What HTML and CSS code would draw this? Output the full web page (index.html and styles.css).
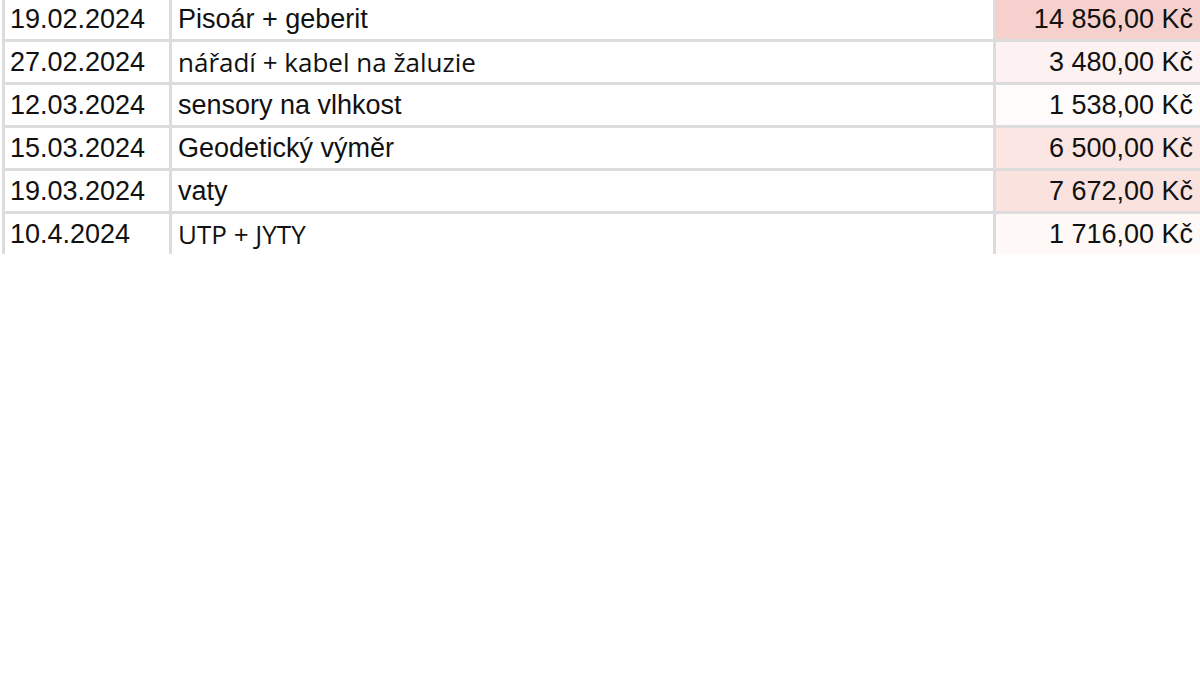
FILE: index.html
```html
<!DOCTYPE html>
<html lang="cs">
<head>
  <meta charset="UTF-8">
  <title>Výdaje</title>
  <link rel="stylesheet" href="styles.css">
</head>
<body>
  <div class="sheet">
    <div class="row">
      <div class="cell date">19.02.2024</div>
      <div class="cell item">Pisoár + geberit</div>
      <div class="cell price p1">14 856,00 Kč</div>
    </div>
    <div class="row">
      <div class="cell date">27.02.2024</div>
      <div class="cell item humanist">nářadí + kabel na žaluzie</div>
      <div class="cell price p2">3 480,00 Kč</div>
    </div>
    <div class="row">
      <div class="cell date">12.03.2024</div>
      <div class="cell item">sensory na vlhkost</div>
      <div class="cell price p3">1 538,00 Kč</div>
    </div>
    <div class="row">
      <div class="cell date">15.03.2024</div>
      <div class="cell item">Geodetický výměr</div>
      <div class="cell price p4">6 500,00 Kč</div>
    </div>
    <div class="row">
      <div class="cell date">19.03.2024</div>
      <div class="cell item">vaty</div>
      <div class="cell price p5">7 672,00 Kč</div>
    </div>
    <div class="row last">
      <div class="cell date">10.4.2024</div>
      <div class="cell item humanist">UTP + JYTY</div>
      <div class="cell price p6">1 716,00 Kč</div>
    </div>
  </div>
</body>
</html>
```

FILE: styles.css
```css
body {
  margin: 0;
  background: #fff;
  font-family: "Liberation Sans", Arial, sans-serif;
  color: #111;
}
.sheet {
  margin-top: -1px;
  margin-left: 2px;
}
.row {
  display: grid;
  grid-template-columns: 167px 824px 1fr;
  height: 40px;
  border-bottom: 3px solid #dcdcdc;
}
.row.last {
  border-bottom: none;
}
.cell {
  border-left: 3px solid #dcdcdc;
  font-size: 27px;
  line-height: 40px;
  white-space: nowrap;
  overflow: hidden;
}
.date {
  padding-left: 5px;
}
.item {
  padding-left: 6px;
}
.cell.humanist {
  font-family: "Open Sans", sans-serif;
  font-size: 26px;
}
.price {
  text-align: right;
  padding-right: 7px;
}

/* podmíněné formátování podle částky */
.p1 { background: #f5d0cc; }
.p2 { background: #fdf2f1; }
.p3 { background: #fffbfa; }
.p4 { background: #fbe6e3; }
.p5 { background: #fae2df; }
.p6 { background: #fef8f7; }
```
